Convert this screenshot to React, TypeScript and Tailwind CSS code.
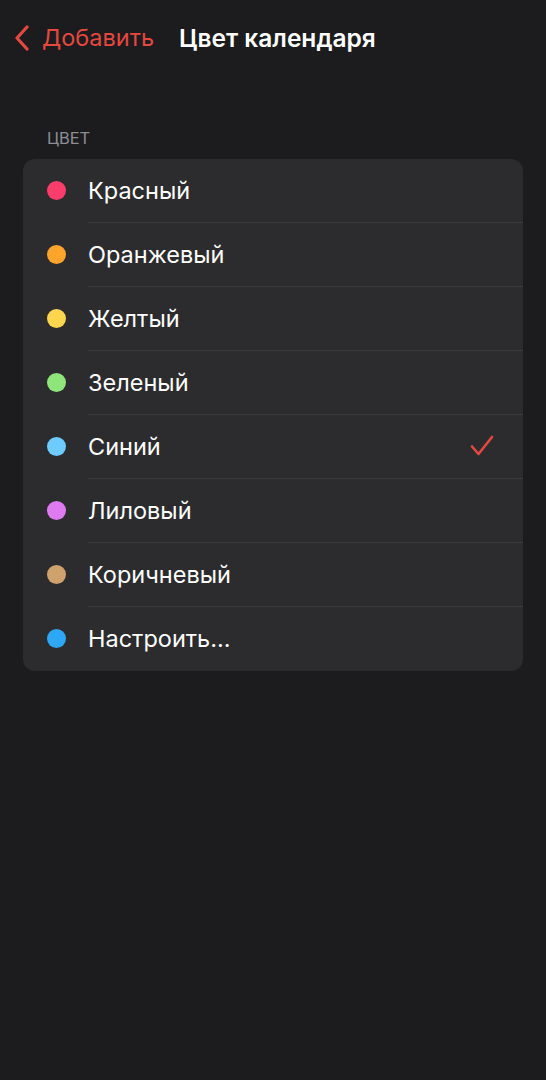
import React from "react";

const colors = [
  { name: "Красный", dot: "bg-[#fb3d6c]" },
  { name: "Оранжевый", dot: "bg-[#ffa42a]" },
  { name: "Желтый", dot: "bg-[#fdd64d]" },
  { name: "Зеленый", dot: "bg-[#8fe57a]" },
  { name: "Синий", dot: "bg-[#6ecbff]" },
  { name: "Лиловый", dot: "bg-[#de7bf0]" },
  { name: "Коричневый", dot: "bg-[#cfa26d]" },
  { name: "Настроить...", dot: "bg-[#2ea8f6]" },
];

const selected = "Синий";

export default function App() {
  return (
    <div
      className="min-h-[1080px] w-full bg-[#1c1c1e] text-white"
      style={{ fontFamily: "Inter, 'Noto Sans', sans-serif" }}
    >
      <div className="flex h-[76px] items-center pl-[12px]">
        <div className="flex items-center gap-[8px] text-[#e5483f]">
          <svg width="22" height="26" viewBox="0 0 22 26" fill="none">
            <path
              d="M15 2 L5 13 L15 24"
              stroke="#e5483f"
              strokeWidth="3.2"
              strokeLinecap="round"
              strokeLinejoin="round"
            />
          </svg>
          <span className="text-[23.5px]">Добавить</span>
        </div>
        <h1 className="ml-[25px] text-[24.5px] font-semibold">Цвет календаря</h1>
      </div>

      <div className="mt-[50px] pl-[47px] text-[16.5px] text-[#8d8d93]">ЦВЕТ</div>

      <div className="mx-[23px] mt-[8px] overflow-hidden rounded-[12px] bg-[#2c2c2e]">
        {colors.map((c, i) => (
          <div key={c.name} className="flex h-[64px] items-center">
            <div className="flex w-[65px] shrink-0 justify-center pl-[2px]">
              <span className={`block h-[19px] w-[19px] rounded-full ${c.dot}`} />
            </div>
            <div
              className={`flex h-full flex-1 items-center pr-[28px] ${
                i < colors.length - 1 ? "border-b border-[#3a3a3c]" : ""
              }`}
            >
              <span className="flex-1 text-[23.5px]">{c.name}</span>
              {c.name === selected && (
                <svg width="26" height="24" viewBox="0 0 26 24" fill="none">
                  <path
                    d="M3 12.5 L9.5 20 L23 3"
                    stroke="#e5483f"
                    strokeWidth="2.6"
                    strokeLinecap="round"
                    strokeLinejoin="round"
                  />
                </svg>
              )}
            </div>
          </div>
        ))}
      </div>
    </div>
  );
}
